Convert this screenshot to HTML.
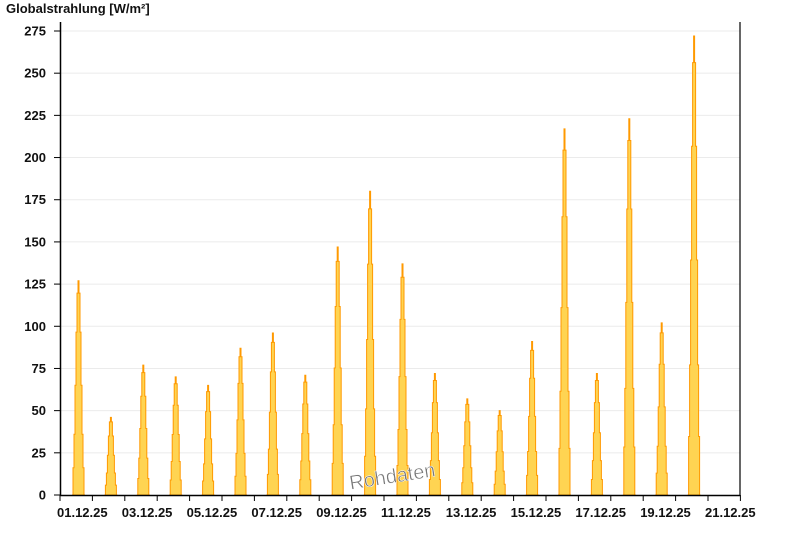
<!DOCTYPE html>
<html><head><meta charset="utf-8"><style>
body{margin:0;background:#fff;width:800px;height:550px;overflow:hidden}
svg text{font-family:"Liberation Sans",sans-serif;font-weight:bold;font-size:13px;fill:#111}
</style></head><body>
<svg id="s" width="800" height="550" xmlns="http://www.w3.org/2000/svg">
<text x="6" y="13">Globalstrahlung [W/m²]</text>
<g id="grid"></g>
<g id="bars"></g>
<g id="ax"></g>
<text x="348" y="482" transform="rotate(-9 398 470)" style="font-family:'Liberation Sans',sans-serif;font-weight:normal;font-size:20px;fill:#777;stroke:#fff;stroke-width:0.5">Rohdaten</text>
</svg>
<script>
var NS="http://www.w3.org/2000/svg",g=document.getElementById('grid'),b=document.getElementById('bars'),a=document.getElementById('ax');
function el(p,t,at,tx){var e=document.createElementNS(NS,t);for(var k in at)e.setAttribute(k,at[k]);if(tx!=null)e.textContent=tx;p.appendChild(e);return e}
var y0=495,k=464/275;
for(var v=0;v<=275;v+=25){var y=y0-v*k;if(v>0)el(g,'line',{x1:61,x2:740,y1:y,y2:y,stroke:'#ebebeb','stroke-width':1});
el(a,'line',{x1:54,x2:60,y1:y,y2:y,stroke:'#000'});el(a,'text',{x:46,y:y+4.5,'text-anchor':'end'},v);}
el(a,'line',{x1:60.5,x2:60.5,y1:22,y2:496,stroke:'#000','stroke-width':1.5});
el(a,'line',{x1:740,x2:740,y1:22,y2:496,stroke:'#000','stroke-width':1.2});
el(a,'line',{x1:60,x2:740,y1:495.5,y2:495.5,stroke:'#000','stroke-width':1.5});
var d=32.4;
for(var i=0;i<=21;i++){var x=60+i*d;if(x>741)break;el(a,'line',{x1:x,x2:x,y1:495,y2:501,stroke:'#000'});
if(i%2==0&&i<=20){var dd=i+1;el(a,'text',{x:x-3,y:517,'text-anchor':'start'},(dd<10?'0':'')+dd+'.12.25');}}
var pk=[127,46,77,70,65,87,96,71,147,180,137,72,57,50,91,217,72,223,102,272];
pk.forEach(function(p,i){var cx=60+i*d+18.5,pts=[];
for(var t=-6;t<=6;t++){var f=Math.exp(-Math.pow(Math.abs(t)/3.6,2.2));var h=p*f*k;var x1=cx+t-0.5,x2=cx+t+0.5;
if(Math.abs(t)==6)h=0;pts.push(x1+','+(y0-h),x2+','+(y0-h));}
pts.unshift((cx-6.5)+','+y0);pts.push((cx+6.5)+','+y0);
el(b,'polygon',{points:pts.join(' '),fill:'#ffd452',stroke:'#ff9900','stroke-width':1});});
</script>
</body></html>
